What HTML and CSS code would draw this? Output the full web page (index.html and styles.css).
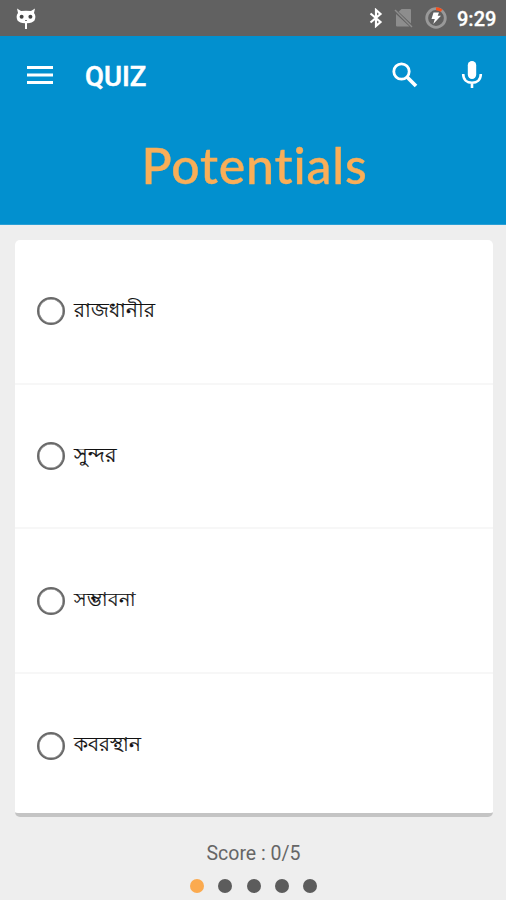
FILE: index.html
```html
<!DOCTYPE html>
<html lang="en">
<head>
<meta charset="utf-8">
<title>Quiz</title>
<link rel="stylesheet" href="styles.css">
</head>
<body>
<div class="screen">
  <div class="status">
    <svg class="cat" width="20" height="24" viewBox="0 0 20 24"><path fill="#fff" d="M1 1.500 5 4Q10 3.300 15 4L19 1.500 18 6Q20.500 9 18.500 13.500Q16.500 16 11 16.300V22H9V16.300Q3.500 16 1.500 13.500Q-.5 9 2 6Z"/><circle cx="5.600" cy="9.700" r="2" fill="#444"/><circle cx="14.400" cy="9.700" r="2" fill="#444"/><path d="M9 13.500h2" stroke="#777"/></svg>
    <span class="spacer"></span>
    <svg class="bt" width="14" height="20" viewBox="0 0 14 20"><path d="M1.500 5.500 11.500 14 7 18V2L11.500 6 1.500 14.500" fill="none" stroke="#fff" stroke-width="2.200"/></svg>
    <svg class="sim" width="19" height="20" viewBox="0 0 19 20"><path fill="#8d8d8d" d="M7.500 1H16Q17 1 17 2V15.400L4.600 3.800ZM2 6 15.500 18.500H3Q2 18.500 2 17.500Z"/><path d="M1 2 18 19" stroke="#8d8d8d" stroke-width="1.500"/></svg>
    <svg class="power" width="22" height="22" viewBox="0 0 22 22"><circle cx="11" cy="11" r="9.300" fill="none" stroke="#999" stroke-width="2.800"/><path d="M11 1.700A9.300 9.300 0 0 1 16.600 3.600" fill="none" stroke="#f4511e" stroke-width="3"/><path fill="#fff" d="M8.500 5.500h5.500l-1.300 3.200H16L8.300 17l1.500-5H6.500Z"/></svg>
    <span class="clock">9:29</span>
  </div>
  <header class="header">
    <div class="toolbar">
      <svg class="menu" width="26" height="20" viewBox="0 0 26 20"><path d="M0 2.500h26M0 10h26M0 17.500h26" stroke="#fff" stroke-width="3"/></svg>
      <h1 class="title">QUIZ</h1>
      <span class="spacer"></span>
      <svg class="search" width="26" height="26" viewBox="0 0 26 26"><circle cx="9.500" cy="9.500" r="7.700" fill="none" stroke="#fff" stroke-width="2.800"/><path d="m15 15 9 9" stroke="#fff" stroke-width="3.700"/></svg>
      <svg class="mic" width="22" height="28" viewBox="0 0 22 28"><rect x="6.800" y="0" width="8.400" height="18" rx="4.200" fill="#fff"/><path d="M2.200 13C2.200 18.600 6 21.700 11 21.700S19.800 18.600 19.800 13M11 21.700V27" fill="none" stroke="#fff" stroke-width="2.600"/></svg>
    </div>
    <div class="word"><span>Potentials</span></div>
  </header>
  <main class="card">
    <label class="option"><span class="radio"></span><span class="answer" lang="bn">রাজধানীর</span></label>
    <label class="option"><span class="radio"></span><span class="answer wide" lang="bn">সুন্দর</span></label>
    <label class="option"><span class="radio"></span><span class="answer narrow" lang="bn">সম্ভাবনা</span></label>
    <label class="option"><span class="radio"></span><span class="answer" lang="bn">কবরস্থান</span></label>
  </main>
  <footer class="footer">
    <div class="score">Score : 0/5</div>
    <div class="dots"><i class="dot active"></i><i class="dot"></i><i class="dot"></i><i class="dot"></i><i class="dot"></i></div>
  </footer>
</div>
</body>
</html>
```
FILE: styles.css
```css
* { box-sizing: border-box; }
body { margin: 0; background: #eee; font-family: Roboto, "Noto Sans", sans-serif; }
.screen { width: 506px; height: 900px; overflow: hidden; display: flex; flex-direction: column; }
.spacer { flex: 1; }
svg { display: block; flex: none; }
.status { height: 36px; background: #616161; display: flex; align-items: center; padding: 0 11px 0 16px; }
.cat { margin-top: 1px; }
.bt { margin-right: 11px; }
.sim { margin-right: 12px; }
.power { margin-right: 10px; }
.clock { color: #fff; font-size: 20px; font-weight: 500; line-height: 36px; width: 38px; white-space: nowrap; padding-top: 2px; -webkit-text-stroke: .3px #fff; }
.header { height: 189px; background: #0290cf; border-bottom: 1px solid #2a9fd5; }
.toolbar { height: 78px; display: flex; align-items: center; padding: 0 23px 0 27px; }
.title { margin: 3px 0 0 32px; color: #fff; font-size: 27.500px; font-weight: 500; line-height: 32px; -webkit-text-stroke: .5px #fff; }
.search { margin-right: 43px; }
.word { height: 102px; text-align: center; color: #f9ae58; font-family: Lato, sans-serif; font-weight: 500; font-size: 50px; line-height: 102px; letter-spacing: .8px; padding-left: 3px; -webkit-text-stroke: .4px #f9ae58; }
.card { margin: 15px 13px 0 15px; height: 577px; background: #fff; border-radius: 5px; border-bottom: 4px solid #c4c4c4; flex: none; }
.option { height: 144.700px; display: flex; align-items: center; padding-left: 22px; border-bottom: 2px solid #f7f7f7; }
.option:last-child { border-bottom: 0; height: 143px; }
.radio { width: 28px; height: 28px; border: 2.500px solid #696969; border-radius: 50%; flex: none; box-shadow: inset 0 0 0 .5px #696969; }
.answer { margin: -3px 0 0 9px; font-size: 20px; line-height: 28px; color: #111; white-space: nowrap; -webkit-text-stroke: .2px #111; }
.answer.wide { font-size: 20.800px; }
.answer.narrow { font-size: 19.400px; margin-top: -2px; }
.option:last-child .answer { font-size: 20.400px; }
.footer { display: flex; flex-direction: column; align-items: center; padding: 25px 0 0 1px; }
.score { font-size: 19.500px; line-height: 24px; color: #666; }
.dots { display: flex; gap: 14.200px; margin-top: 13px; }
.dot { width: 14px; height: 14px; border-radius: 50%; background: #5c5c5c; }
.dot.active { background: #fbaa4f; }
```
